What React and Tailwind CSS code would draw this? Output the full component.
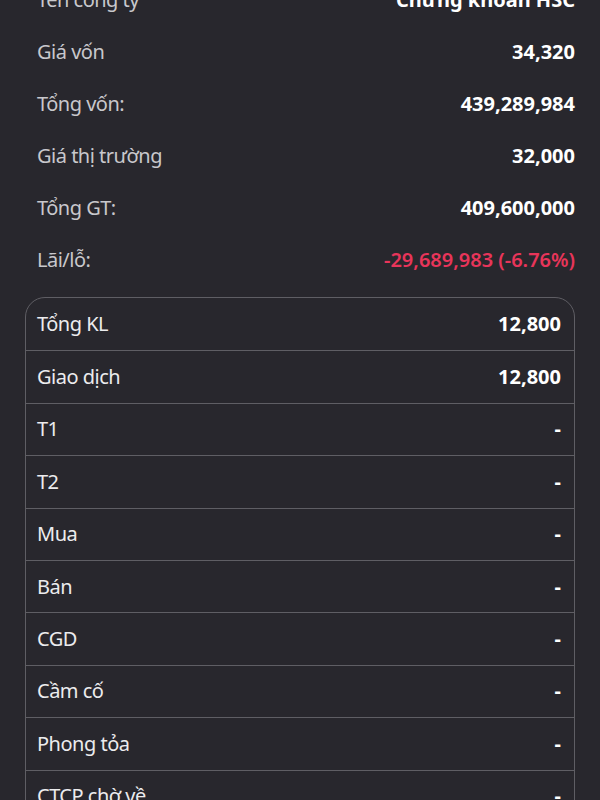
const summary = [
  { label: 'Tên công ty', value: 'Chứng khoán HSC' },
  { label: 'Giá vốn', value: '34,320' },
  { label: 'Tổng vốn:', value: '439,289,984' },
  { label: 'Giá thị trường', value: '32,000' },
  { label: 'Tổng GT:', value: '409,600,000' },
  { label: 'Lãi/lỗ:', value: '-29,689,983 (-6.76%)', loss: true },
];

const volumes = [
  { label: 'Tổng KL', value: '12,800' },
  { label: 'Giao dịch', value: '12,800' },
  { label: 'T1', value: '-' },
  { label: 'T2', value: '-' },
  { label: 'Mua', value: '-' },
  { label: 'Bán', value: '-' },
  { label: 'CGD', value: '-' },
  { label: 'Cầm cố', value: '-' },
  { label: 'Phong tỏa', value: '-' },
  { label: 'CTCP chờ về', value: '-' },
];

function App() {
  return (
    <div
      className="h-[800px] overflow-hidden bg-[#28272d] text-[20px]"
      style={{ fontFamily: '"Noto Sans", "Open Sans", sans-serif' }}
    >
      <div className="-mt-[26px] pl-[37px] pr-[25px]">
        {summary.map((row) => (
          <div key={row.label} className="flex h-[52px] items-center justify-between">
            <span className="tracking-[-0.5px] text-[#c8c8cc]">{row.label}</span>
            <span className={row.loss ? 'font-semibold text-[#e8355a]' : 'font-bold text-white'}>
              {row.value}
            </span>
          </div>
        ))}
      </div>

      <div className="mx-[25px] mt-[11px] rounded-t-[20px] border border-[#5f5e64]">
        {volumes.map((row, index) => (
          <div
            key={row.label}
            className={`flex h-[52.4px] items-center justify-between pl-[11px] pr-[13px] ${
              index > 0 ? 'border-t border-[#5f5e64]' : ''
            }`}
          >
            <span className="tracking-[-0.5px] text-[#ececee]">{row.label}</span>
            <span className="font-bold text-white">{row.value}</span>
          </div>
        ))}
      </div>
    </div>
  );
}

export default App;
